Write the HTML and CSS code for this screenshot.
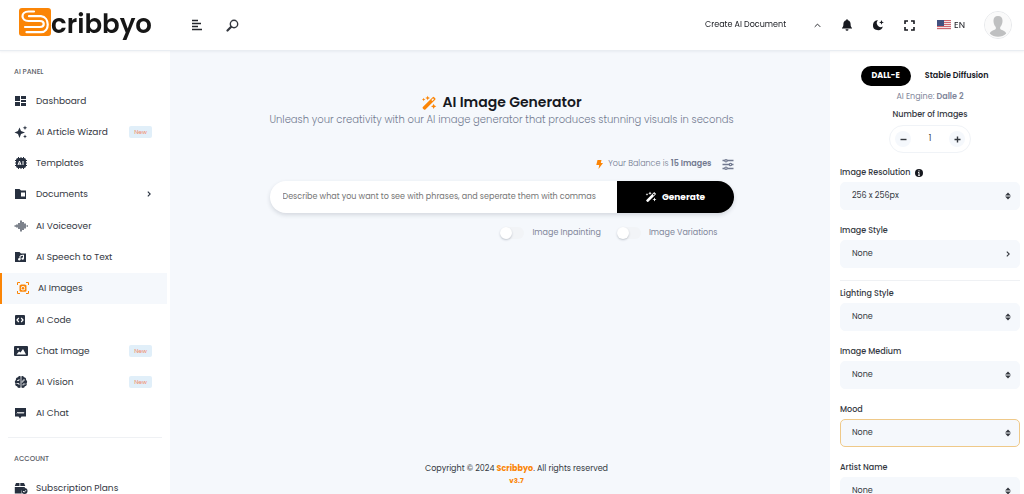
FILE: index.html
```
<!DOCTYPE html>
<html lang="en">
<head>
    <meta charset="UTF-8">
    <meta name="viewport" content="width=device-width, initial-scale=1.0">
    <title>AI Image Generator - Scribbyo</title>
    <link rel="stylesheet" href="styles.css">
</head>
<body>
    <!-- shared icons -->
    <svg class="icon-defs" aria-hidden="true">
        <symbol id="wand" viewBox="0 0 24 24">
            <path fill="currentColor" fill-rule="evenodd" d="M17.5 3.2a1.6 1.6 0 0 1 2.2 0l1.6 1.6a1.6 1.6 0 0 1 0 2.2L6.6 21.7a1.6 1.6 0 0 1-2.2 0l-1.6-1.6a1.6 1.6 0 0 1 0-2.2zM15.500 7.500l1.500 1.500 2.500-2.500L18 5z"/>
            <path fill="currentColor" d="M10 1l1 2.500L13.500 4.500 11 5.500 10 8 9 5.500 6.500 4.500 9 3.500zM4 4l.8 1.900L6.700 6.700 4.800 7.500 4 9.400 3.200 7.500 1.300 6.700 3.200 5.900zM19 13l1.200 2.800L23 17l-2.800 1.200L19 21l-1.200-2.800L15 17l2.800-1.200z"/>
        </symbol>
        <symbol id="sort" viewBox="0 0 10 12">
            <path fill="currentColor" d="M5 0L9.800 5H0.200zM5 12L0.200 7H9.800z"/>
        </symbol>
        <symbol id="chevron-right" viewBox="0 0 10 10">
            <path fill="none" stroke="currentColor" stroke-width="1.800" d="M3 1l4 4-4 4"/>
        </symbol>
    </svg>

    <header class="header">
        <a class="logo" href="#">
            <svg class="logo-mark" viewBox="0 0 32 28" aria-hidden="true">
                <rect width="32" height="28" rx="3" fill="#fb8506"/>
                <path d="M15 3.500H9.500C1.500 3.500 1.500 13 9.500 13H21c5 0 5 6 0 6H6" fill="none" stroke="#fff" stroke-width="2.200" stroke-linecap="round"/>
                <path d="M10 8.200h12c9 .8 9 16 0 16H7.500" fill="none" stroke="#fff" stroke-width="2.200" stroke-linecap="round"/>
            </svg>
            <span>cribbyo</span>
        </a>
        <div class="header-tools">
            <button type="button" class="icon-button" aria-label="Toggle menu">
                <svg width="11" height="12" viewBox="0 0 11 12"><path d="M1 1.500h6M1 4.500h9M1 7.500h6M1 10.500h10" stroke="#22252b" stroke-width="1.400"/></svg>
            </button>
            <button type="button" class="icon-button" aria-label="Search">
                <svg width="13" height="13" viewBox="0 0 13 13"><circle cx="8" cy="5" r="3.700" fill="none" stroke="currentColor" stroke-width="1.400"/><path d="M5.200 7.800L1.500 11.500" stroke="currentColor" stroke-width="2.200" stroke-linecap="round"/></svg>
            </button>
        </div>
        <div class="header-right">
            <button type="button" class="create-button">
                Create AI Document
                <svg width="7" height="7" viewBox="0 0 10 10"><path d="M1 7l4-4 4 4" fill="none" stroke="currentColor" stroke-width="1.300"/></svg>
            </button>
            <button type="button" class="icon-button" aria-label="Notifications">
                <svg width="12" height="12" viewBox="0 0 12 12"><path fill="currentColor" d="M6 0.300c.6 0 .9.400.9.900C8.800 1.700 9.600 3.200 9.600 5c0 2.300.5 3 1.400 4v.5H1V9c.9-1 1.400-1.700 1.400-4 0-1.800.8-3.300 2.700-3.800 0-.5.300-.9.900-.9zM4.500 10.200h3a1.500 1.500 0 0 1-3 0z"/></svg>
            </button>
            <button type="button" class="icon-button" aria-label="Dark mode">
                <svg width="13" height="12" viewBox="0 0 13 12"><path fill="currentColor" d="M6 1.200A4 4 0 0 0 10.800 7.500 5 5 0 1 1 6 1.200z"/><path fill="currentColor" d="M9.500 1l.7 1.700 1.700.7-1.700.7-.7 1.700-.7-1.700-1.700-.7 1.700-.7z"/></svg>
            </button>
            <button type="button" class="icon-button" aria-label="Full screen">
                <svg width="11" height="11" viewBox="0 0 11 11"><path d="M1 4V1h3M7 1h3v3M10 7v3H7M4 10H1V7" fill="none" stroke="currentColor" stroke-width="1.600"/></svg>
            </button>
            <button type="button" class="language-button">
                <svg width="14" height="10" viewBox="0 0 14 10" aria-hidden="true">
                    <rect width="14" height="10" fill="#f3e4e6"/>
                    <path d="M0 .5h14M0 2.500h14M0 4.500h14M0 6.500h14M0 8.500h14" stroke="#cf6570"/>
                    <rect width="7" height="6" fill="#41507f"/>
                </svg>
                EN
            </button>
            <button type="button" class="avatar" aria-label="Profile">
                <svg width="26" height="26" viewBox="0 0 26 26"><circle cx="13" cy="13" r="13" fill="#fafafa"/><path fill="#bfc0c1" d="M13 4c3.200 0 4.700 2.200 4.500 5.200-.1 2.500-1 4.500-2.300 5.800v2c2 1.500 5 1.500 6 4.500a12 12 0 0 1-16.400 0c1-3 4-3 6-4.500v-2c-1.300-1.300-2.200-3.300-2.300-5.800C8.300 6.200 9.800 4 13 4z"/></svg>
            </button>
        </div>
    </header>

    <div class="page">
        <nav class="sidebar">
            <h2 class="menu-title">AI PANEL</h2>
            <ul class="menu">
                <li><a class="menu-item" href="#">
                    <svg viewBox="0 0 14 14"><path fill="currentColor" d="M1 2h5v5H1zM1 8h5v4H1zM7 2h5v3H7zM7 6h5v2H7zM7 9h5v3H7z"/></svg>
                    Dashboard</a></li>
                <li><a class="menu-item" href="#">
                    <svg viewBox="0 0 14 14"><path fill="currentColor" d="M5.500 2.500L7 6l4 1.500L7 9l-1.500 4L4 9 .5 7.500 4 6zM11 .5l.6 1.700 1.700.6-1.700.6L11 5l-.6-1.600-1.700-.6 1.700-.6zM11 9.500l.6 1.400 1.400.6-1.400.6-.6 1.400-.6-1.400-1.400-.6 1.400-.6z"/></svg>
                    AI Article Wizard <span class="badge">New</span></a></li>
                <li><a class="menu-item" href="#">
                    <svg viewBox="0 0 14 14"><path d="M4.500 1v12M7 1v12M9.500 1v12M1 4.500h12M1 7h12M1 9.500h12" stroke="currentColor"/><rect x="2" y="2" width="10" height="10" rx="2" fill="currentColor"/><path d="M4 9l1.500-4L7 9M4.600 8h1.800M9 5v4" fill="none" stroke="#fff"/></svg>
                    Templates</a></li>
                <li><a class="menu-item" href="#">
                    <svg viewBox="0 0 14 14"><path fill="currentColor" fill-rule="evenodd" d="M1 2h4.500L7 3.500h5V12H1zM7 5.500v4h4v-4z"/></svg>
                    Documents <svg class="menu-arrow"><use href="#chevron-right"/></svg></a></li>
                <li><a class="menu-item" href="#">
                    <svg viewBox="0 0 14 14"><path d="M.5 7h1.500M3 5.500v3M5 4v6M7 1.500v11M9 3v8M11 4.500v5M12.500 7H14" stroke="currentColor" stroke-width="1.200"/></svg>
                    AI Voiceover</a></li>
                <li><a class="menu-item" href="#">
                    <svg viewBox="0 0 14 14"><path fill="currentColor" d="M1 2h4.500L7 3.500h5V12H1z"/><path d="M6 9V6l3.500-1v3.500" fill="none" stroke="#fff"/><circle cx="5.300" cy="9.200" r="1.200" fill="#fff"/><circle cx="8.700" cy="8.600" r="1.200" fill="#fff"/></svg>
                    AI Speech to Text</a></li>
                <li><a class="menu-item active" href="#" aria-current="page">
                    <svg viewBox="0 0 14 14"><path d="M1.500 4V1.500H4M10 1.500h2.500V4M12.500 10v2.500H10M4 12.500H1.500V10" fill="none" stroke="currentColor"/><path fill="currentColor" fill-rule="evenodd" d="M5 3.500h4l1.500 1v5.500l-1 .7h-5l-1-.7V4.500zM7 5a2.200 2.200 0 1 0 0 4.400A2.200 2.200 0 1 0 7 5z"/><circle cx="7" cy="7.200" r="1.300" fill="currentColor"/></svg>
                    AI Images</a></li>
                <li><a class="menu-item" href="#">
                    <svg viewBox="0 0 14 14"><rect x="1" y="2" width="10" height="10" rx="1" fill="currentColor"/><path d="M4.800 5L3 7l1.800 2M7.200 5L9 7 7.200 9" fill="none" stroke="#fff" stroke-width="1.200"/></svg>
                    AI Code</a></li>
                <li><a class="menu-item" href="#">
                    <svg viewBox="0 0 14 14"><rect y="2" width="14" height="10" rx="1" fill="currentColor"/><path fill="#fff" d="M2.500 10.500l2.500-3 1.500 1L9 5l3 5.500z"/><circle cx="4" cy="5" r="1" fill="#fff"/></svg>
                    Chat Image <span class="badge">New</span></a></li>
                <li><a class="menu-item" href="#">
                    <svg viewBox="0 0 14 14"><path fill="currentColor" d="M6.600 1.500v11c-1.600 1-3.200.3-3.400-1.200C1.500 11 .8 9.500 1.500 8.200c-1-1-.9-2.700.4-3.300C1.700 3.300 2.700 2.200 4 2.200 4.500 1 5.900.7 6.600 1.500zM7.400 1.500v11c1.600 1 3.200.3 3.400-1.200 1.700-.3 2.400-1.800 1.700-3.100 1-1 .9-2.700-.4-3.300.2-1.600-.8-2.700-2.100-2.700-.5-1.200-1.900-1.500-2.600-.7z"/><path d="M3 5.500h2V4M2.500 8.500H5V10M11 5H9v2H7.500M11.500 9H9v1.500" fill="none" stroke="#fff" stroke-width=".8"/></svg>
                    AI Vision <span class="badge">New</span></a></li>
                <li><a class="menu-item" href="#">
                    <svg viewBox="0 0 14 14"><path fill="currentColor" d="M1 2h11v8.500H7.500l-1.500 2-1.500-2H1z"/><path d="M3 7.500l1-1.500 1 1.500L6 6l1 1.500L8 6l1 1.500L10 6" fill="none" stroke="#fff" stroke-width=".9"/></svg>
                    AI Chat</a></li>
            </ul>
            <hr class="menu-divider">
            <h2 class="menu-title">ACCOUNT</h2>
            <ul class="menu-account">
                <li><a class="menu-item" href="#">
                    <svg viewBox="0 0 14 14"><path fill="currentColor" d="M2 2h3.500v3H.8zM6.300 2H10l1.300 3h-5zM.8 6h10v1.200a3.500 3.500 0 0 0-3 5.300h-7z"/><circle cx="10.500" cy="10" r="3" fill="currentColor"/><path d="M9 10l1.200 1.200L12 9.200" fill="none" stroke="#fff" stroke-width=".9"/></svg>
                    Subscription Plans</a></li>
            </ul>
        </nav>

        <main class="content">
            <h1 class="title"><svg class="title-icon" aria-hidden="true"><use href="#wand"/></svg>AI Image Generator</h1>
            <p class="subtitle">Unleash your creativity with our AI image generator that produces stunning visuals in seconds</p>

            <form class="generator">
                <div class="balance">
                    <svg width="7" height="9" viewBox="0 0 7 9" aria-hidden="true"><path fill="#fb8506" d="M1.500 0h4L4.800 3H7L2.500 9l.7-4H.3z"/></svg>
                    <span>Your Balance is <strong>15 Images</strong></span>
                    <button type="button" class="icon-button settings" aria-label="Settings">
                        <svg width="12" height="11" viewBox="0 0 12 11"><path d="M0.500 1.500h11M0.500 5.500h11M0.500 9.500h11" stroke="currentColor" stroke-width="1.400"/><g fill="#f5f8fc" stroke="currentColor" stroke-width="1.200"><circle cx="4" cy="1.800" r="1.200"/><circle cx="8.500" cy="5.500" r="1.200"/><circle cx="4" cy="9.200" r="1.200"/></g></svg>
                    </button>
                </div>
                <div class="prompt">
                    <input type="text" class="prompt-input" aria-label="Prompt" placeholder="Describe what you want to see with phrases, and seperate them with commas">
                    <button type="button" class="generate-button"><svg width="12" height="12" aria-hidden="true"><use href="#wand"/></svg>Generate</button>
                </div>
                <div class="switches">
                    <label class="switch"><input type="checkbox">Image Inpainting</label>
                    <label class="switch"><input type="checkbox">Image Variations</label>
                </div>
            </form>

            <footer class="footer">
                <p>Copyright © 2024 <a href="#">Scribbyo</a>. All rights reserved</p>
                <p class="version">v3.7</p>
            </footer>
        </main>

        <aside class="options">
            <div class="engines">
                <button type="button" class="engine selected">DALL-E</button>
                <button type="button" class="engine">Stable Diffusion</button>
            </div>
            <p class="engine-name">AI Engine: <strong>Dalle 2</strong></p>
            <label class="count-label" for="count">Number of Images</label>
            <div class="counter">
                <button type="button" aria-label="Less"><svg width="7" height="7" viewBox="0 0 7 7"><path d="M0.500 3.500h6" stroke="currentColor" stroke-width="1.400"/></svg></button>
                <input type="text" id="count" value="1">
                <button type="button" aria-label="More"><svg width="7" height="7" viewBox="0 0 7 7"><path d="M0.500 3.500h6M3.500 .5v6" stroke="currentColor" stroke-width="1.400"/></svg></button>
            </div>

            <div class="field">
                <label for="resolution">Image Resolution
                    <svg width="8" height="8" viewBox="0 0 8 8" aria-hidden="true"><circle cx="4" cy="4" r="4" fill="#17191f"/><path d="M4 1.200v1.300M4 3.300v3.200M3 3.500h1M3 6.300h2" stroke="#fff" stroke-width=".9"/></svg>
                </label>
                <div class="select-box"><select id="resolution"><option>256 x 256px</option><option>512 x 512px</option><option>1024 x 1024px</option></select><svg><use href="#sort"/></svg></div>
            </div>
            <div class="field">
                <label for="style">Image Style</label>
                <div class="select-box"><button type="button" id="style">None</button><svg><use href="#chevron-right"/></svg></div>
            </div>
            <hr class="options-divider">
            <div class="field">
                <label for="lighting">Lighting Style</label>
                <div class="select-box"><select id="lighting"><option>None</option></select><svg><use href="#sort"/></svg></div>
            </div>
            <div class="field">
                <label for="medium">Image Medium</label>
                <div class="select-box"><select id="medium"><option>None</option></select><svg><use href="#sort"/></svg></div>
            </div>
            <div class="field">
                <label for="mood">Mood</label>
                <div class="select-box current"><select id="mood"><option>None</option></select><svg><use href="#sort"/></svg></div>
            </div>
            <div class="field">
                <label for="artist">Artist Name</label>
                <div class="select-box"><select id="artist"><option>None</option></select><svg><use href="#sort"/></svg></div>
            </div>
        </aside>
    </div>
</body>
</html>
```
FILE: styles.css
```
* {
    box-sizing: border-box;
}
body {
    display: flex;
    flex-direction: column;
    height: 100vh;
    margin: 0;
    overflow: hidden;
    background-color: #f5f8fc;
    color: #34383f;
    font-family: Poppins, Inter, sans-serif;
    font-size: 8px;
    line-height: 12px;
}
h1, h2, p, ul {
    margin: 0;
    padding: 0;
}
ul {
    list-style: none;
}
a {
    color: inherit;
    text-decoration: none;
}
button, input, select {
    font: inherit;
    color: inherit;
    border: none;
    padding: 0;
    background: none;
}
button {
    cursor: pointer;
}
svg {
    display: block;
    flex: none;
}
.icon-defs {
    position: absolute;
    width: 0;
    height: 0;
}

/* header */
.header {
    display: flex;
    flex: none;
    align-items: center;
    height: 51px;
    padding-right: 12px;
    background-color: #fff;
    border-bottom: 1px solid #e9edf2;
    box-shadow: 0 1px 2px rgba(30, 50, 80, 0.06);
    z-index: 1;
}
.logo {
    display: flex;
    width: 190px;
    height: 38px;
    padding-left: 19px;
    color: #161616;
    font-size: 26px;
    font-weight: 600;
    line-height: 36px;
}
.logo-mark {
    width: 32px;
    height: 32px;
}
.header-tools, .header-right {
    display: flex;
    align-items: center;
}
.header-tools {
    gap: 24px;
    padding-left: 1px;
}
.header-right {
    gap: 19px;
    margin-left: auto;
    color: #17191f;
}
.icon-button {
    display: flex;
}
.create-button {
    display: flex;
    align-items: center;
    gap: 28px;
    margin-right: 1px;
}
.language-button {
    display: flex;
    align-items: center;
    gap: 3px;
    margin-left: 3px;
    font-size: 9px;
}
.avatar {
    border: 1px solid #e6e8eb;
    border-radius: 50%;
}

.page {
    display: flex;
    flex: 1;
    min-height: 0;
}

/* sidebar */
.sidebar {
    width: 170px;
    flex: none;
    padding-top: 15px;
    overflow-y: auto;
    scrollbar-width: none;
    background-color: #fff;
    font-size: 9px;
}
.menu-title {
    padding-left: 14px;
    color: #5c6068;
    font-size: 7px;
    font-weight: 500;
    line-height: 12px;
}
.menu {
    display: grid;
    grid-auto-rows: 1fr;
    min-height: 344px;
    margin-top: 7px;
}
.menu-item {
    display: flex;
    align-items: center;
    gap: 8px;
    height: 100%;
    margin-right: 3px;
    padding: 0 15px 0 14px;
}
.menu-item svg {
    width: 14px;
    height: 14px;
    color: #27303f;
}
.menu-item.active {
    background-color: #f5f8fc;
    border-left: 2px solid #fb8506;
}
.menu-item.active svg {
    color: #fb8506;
}
.menu-item .menu-arrow {
    width: 6px;
    height: 6px;
    margin-left: auto;
}
.badge {
    margin-left: auto;
    padding: 0 5px;
    border-radius: 2px;
    background-color: #e1eff9;
    color: #f08a6c;
    font-size: 6px;
}
.menu-divider, .options-divider {
    border: none;
    border-top: 1px solid #eff1f4;
}
.menu-divider {
    margin: 8px 8px 15px;
}
.menu-account .menu-item {
    height: 31px;
}
.menu-account {
    margin-top: 7px;
}

/* main area */
.content {
    display: flex;
    flex: 1;
    flex-direction: column;
    align-items: center;
    padding: 42px 20px 7px 23px;
}
.title {
    display: flex;
    align-items: center;
    gap: 5px;
    color: #17191f;
    font-size: 14px;
    font-weight: 600;
    line-height: 19px;
}
.title-icon {
    width: 16px;
    height: 16px;
    color: #fb8506;
}
.subtitle {
    color: #727a90;
    font-size: 10px;
    font-weight: 300;
    line-height: 16px;
}
.generator {
    width: 100%;
    max-width: 464px;
    margin-top: 30px;
}
.balance {
    display: flex;
    align-items: center;
    justify-content: flex-end;
    gap: 5px;
    color: #727a90;
    font-weight: 300;
}
.balance strong {
    font-weight: 600;
}
.settings {
    margin-left: 5px;
}
.prompt {
    display: flex;
    height: 32px;
    margin-top: 11px;
    overflow: hidden;
    border-radius: 16px;
    background-color: #fff;
    box-shadow: 0 2px 4px rgba(40, 50, 70, 0.16);
}
.prompt-input {
    flex: 1;
    min-width: 0;
    padding-left: 13px;
    outline: none;
}
.prompt-input::placeholder {
    color: #757575;
}
.generate-button {
    display: flex;
    align-items: center;
    justify-content: center;
    gap: 5px;
    width: 117px;
    background-color: #000;
    color: #fff;
    font-size: 9px;
    font-weight: 700;
}
.switches {
    display: flex;
    justify-content: flex-end;
    gap: 16px;
    margin-top: 13px;
    padding-right: 16px;
    color: #7f869a;
}
.switch {
    display: flex;
    align-items: center;
    gap: 8px;
    height: 14px;
}
.switch input {
    width: 24px;
    height: 12px;
    margin: 0;
    appearance: none;
    border-radius: 6px;
    background-color: #f2f4f7;
}
.switch input::before {
    content: "";
    display: block;
    width: 12px;
    height: 12px;
    border-radius: 50%;
    background-color: #fff;
    box-shadow: 0 1px 2px rgba(40, 50, 70, 0.25);
}
.switch input:checked::before {
    margin-left: auto;
}
.footer {
    margin-top: auto;
    padding-left: 30px;
    text-align: center;
}
.footer a, .version {
    color: #fb8506;
    font-weight: 700;
}
.version {
    font-size: 7px;
}

/* options panel */
.options {
    width: 194px;
    flex: none;
    padding: 15px 4px 0 10px;
    overflow-y: auto;
    scrollbar-width: none;
    background-color: #fff;
    text-align: center;
}
.engines {
    display: flex;
    justify-content: center;
    gap: 3px;
}
.engine {
    height: 20px;
    padding: 0 11px;
    border-radius: 10px;
    color: #17191f;
    font-weight: 600;
}
.engine.selected {
    background-color: #000;
    color: #fff;
    font-weight: 700;
}
.engine-name {
    margin-top: 5px;
    color: #7f869a;
}
.engine-name strong {
    font-weight: 600;
}
.count-label {
    display: block;
    margin-top: 6px;
    font-weight: 500;
}
.counter {
    display: flex;
    align-items: center;
    justify-content: space-between;
    width: 82px;
    height: 28px;
    margin: 4px auto 14px;
    padding: 0 5px;
    border: 1px solid #f0f3f7;
    border-radius: 14px;
}
.counter button {
    display: flex;
    align-items: center;
    justify-content: center;
    width: 16px;
    height: 16px;
    border-radius: 50%;
    background-color: #f5f8fc;
}
.counter input {
    width: 24px;
    text-align: center;
}
.field {
    margin-bottom: 15px;
    text-align: left;
}
.field label {
    display: flex;
    align-items: center;
    gap: 5px;
    height: 12px;
    margin-bottom: 3px;
    font-weight: 500;
}
.select-box {
    display: grid;
    align-items: center;
    height: 28px;
    border: 1px solid #f5f8fc;
    border-radius: 5px;
    background-color: #f5f8fc;
}
.select-box.current {
    border-color: #efc989;
}
.select-box select, .select-box button, .select-box svg {
    grid-area: 1 / 1;
}
.select-box select, .select-box button {
    height: 100%;
    padding: 0 11px;
    appearance: none;
    outline: none;
    text-align: left;
}
.select-box svg {
    justify-self: end;
    width: 6px;
    height: 8px;
    margin-right: 8px;
    pointer-events: none;
}
.options-divider {
    margin: -3px 0 7px;
}
```
